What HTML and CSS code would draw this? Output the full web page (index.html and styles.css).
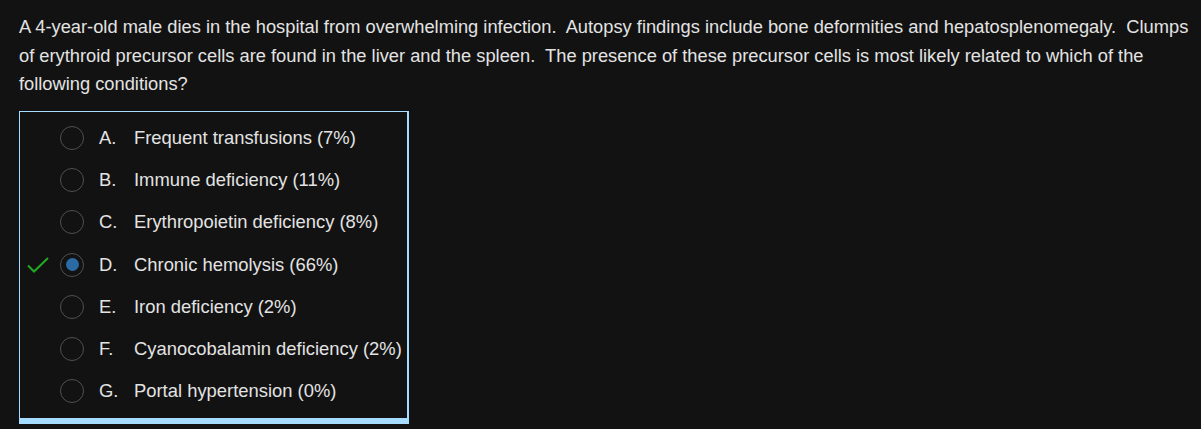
FILE: index.html
```html
<!DOCTYPE html>
<html>
<head>
<meta charset="utf-8">
<link rel="stylesheet" href="styles.css">
</head>
<body>
<div class="page">
  <p class="question">A 4-year-old male dies in the hospital from overwhelming infection.&nbsp; Autopsy findings include bone deformities and hepatosplenomegaly.&nbsp; Clumps of erythroid precursor cells are found in the liver and the spleen.&nbsp; The presence of these precursor cells is most likely related to which of the following conditions?</p>
  <div class="choices">
    <div class="choice"><span class="mark"></span><span class="radio"></span><span class="letter">A.</span><span class="text">Frequent transfusions (7%)</span></div>
    <div class="choice"><span class="mark"></span><span class="radio"></span><span class="letter">B.</span><span class="text">Immune deficiency (11%)</span></div>
    <div class="choice"><span class="mark"></span><span class="radio"></span><span class="letter">C.</span><span class="text">Erythropoietin deficiency (8%)</span></div>
    <div class="choice"><span class="mark"><svg width="22" height="16" viewBox="0 0 22 16"><path d="M1 8.5 L7 14.5 L21 1" fill="none" stroke="#22aa22" stroke-width="2"/></svg></span><span class="radio selected"></span><span class="letter">D.</span><span class="text">Chronic hemolysis (66%)</span></div>
    <div class="choice"><span class="mark"></span><span class="radio"></span><span class="letter">E.</span><span class="text">Iron deficiency (2%)</span></div>
    <div class="choice"><span class="mark"></span><span class="radio"></span><span class="letter">F.</span><span class="text">Cyanocobalamin deficiency (2%)</span></div>
    <div class="choice"><span class="mark"></span><span class="radio"></span><span class="letter">G.</span><span class="text">Portal hypertension (0%)</span></div>
  </div>
</div>
</body>
</html>
```
FILE: styles.css
```css
html, body {
  margin: 0;
  padding: 0;
  background: #121212;
}
.page {
  padding: 13px 8px 0 19px;
  font-family: "Liberation Sans", Arial, sans-serif;
  font-size: 18.3px;
  color: #e3e3e3;
}
.question {
  margin: 0;
  line-height: 28.5px;
}
.choices {
  margin-top: 12.5px;
  width: 387px;
  border: 1px solid #a6dcff;
  border-right-width: 2px;
  border-bottom-width: 6px;
  padding: 5px 0 6px;
  font-size: 18.4px;
}
.choice {
  display: flex;
  align-items: center;
  height: 42.2px;
}
.mark {
  width: 40px;
  display: flex;
  justify-content: flex-end;
  padding-right: 11px;
  box-sizing: border-box;
}
.radio {
  width: 24px;
  height: 24px;
  box-sizing: border-box;
  border: 1.5px solid #505050;
  border-radius: 50%;
  display: flex;
  align-items: center;
  justify-content: center;
  flex: none;
}
.radio.selected::after {
  content: "";
  width: 13px;
  height: 13px;
  border-radius: 50%;
  background: #2b6aa3;
}
.letter {
  width: 35px;
  padding-left: 15px;
  flex: none;
}
.text {
  white-space: nowrap;
}
```
